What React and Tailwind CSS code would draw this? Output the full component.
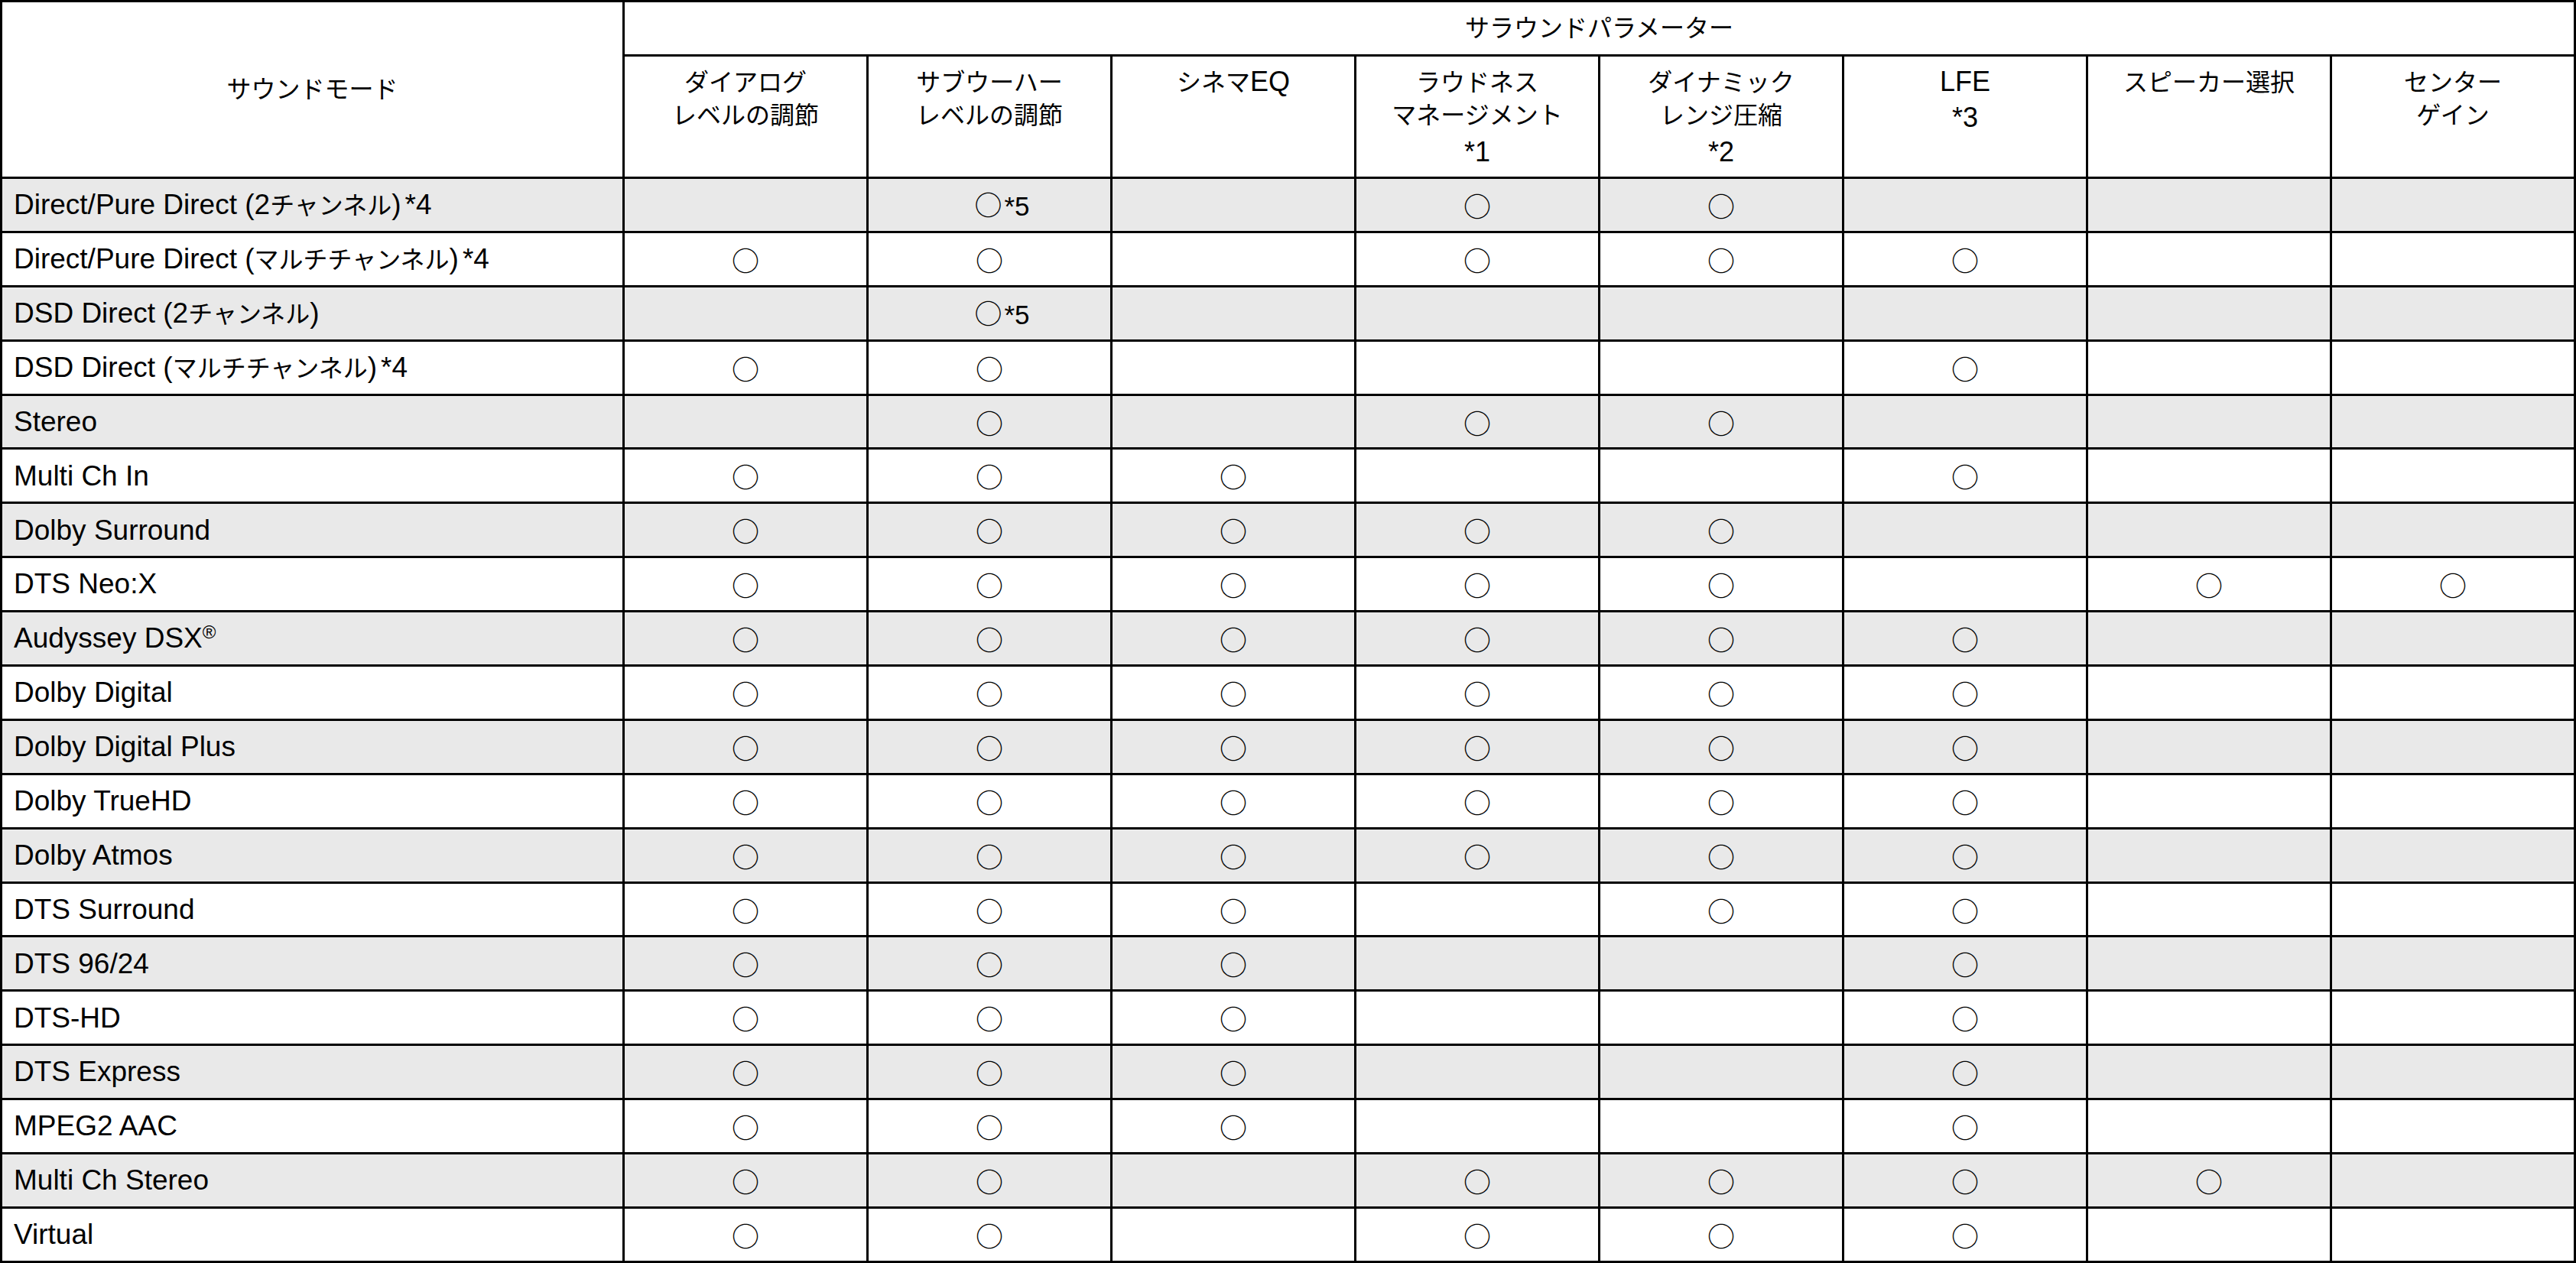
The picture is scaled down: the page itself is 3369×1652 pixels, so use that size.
const HEADERS = [
    ["ダイアログ", "レベルの調節"],
    ["サブウーハー", "レベルの調節"],
    ["シネマEQ"],
    ["ラウドネス", "マネージメント", "*1"],
    ["ダイナミック", "レンジ圧縮", "*2"],
    ["LFE", "*3"],
    ["スピーカー選択"],
    ["センター", "ゲイン"],
];

const Ja = ({ children }) => <span className="text-[32px]">{children}</span>;
const Note = ({ children }) => <span className="ml-[5px]">{children}</span>;

// wrap runs of Japanese in the smaller size, Latin stays at the cell size
function mixed(text) {
    return text.split(/([^\x20-\x7e]+)/).map((part, i) =>
        /[^\x20-\x7e]/.test(part) ? <Ja key={i}>{part}</Ja> : part,
    );
}

// marks: 0 = empty, 1 = ○, 5 = ○*5
const ROWS = [
    { label: <>Direct/Pure Direct (2<Ja>チャンネル</Ja>)<Note>*4</Note></>, marks: "05011000" },
    { label: <>Direct/Pure Direct (<Ja>マルチチャンネル</Ja>)<Note>*4</Note></>, marks: "11011100" },
    { label: <>DSD Direct (2<Ja>チャンネル</Ja>)</>, marks: "05000000" },
    { label: <>DSD Direct (<Ja>マルチチャンネル</Ja>)<Note>*4</Note></>, marks: "11000100" },
    { label: "Stereo", marks: "01011000" },
    { label: "Multi Ch In", marks: "11100100" },
    { label: "Dolby Surround", marks: "11111000" },
    { label: "DTS Neo:X", marks: "11111011" },
    { label: <>Audyssey DSX<sup className="text-[24px]">®</sup></>, marks: "11111100" },
    { label: "Dolby Digital", marks: "11111100" },
    { label: "Dolby Digital Plus", marks: "11111100" },
    { label: "Dolby TrueHD", marks: "11111100" },
    { label: "Dolby Atmos", marks: "11111100" },
    { label: "DTS Surround", marks: "11101100" },
    { label: "DTS 96/24", marks: "11100100" },
    { label: "DTS-HD", marks: "11100100" },
    { label: "DTS Express", marks: "11100100" },
    { label: "MPEG2 AAC", marks: "11100100" },
    { label: "Multi Ch Stereo", marks: "11011110" },
    { label: "Virtual", marks: "11011100" },
];

function Mark({ value }) {
    if (value === "0") return null;
    return (
        <div className="flex items-baseline justify-center">
            <span className="font-['Noto_Sans_CJK_JP',sans-serif] text-[36px] leading-none">○</span>
            {value === "5" && (
                <span className="w-0 whitespace-nowrap pl-[3px] text-[35px] leading-none">*5</span>
            )}
        </div>
    );
}

function HeaderCell({ lines }) {
    return (
        <div className="flex flex-col items-center bg-white pt-[12px] text-[36px] leading-[41px]">
            {lines.map((line, i) => {
                const latinOnly = i > 0 && /^[\x20-\x7e]+$/.test(line);
                return (
                    <div key={i} className={latinOnly ? "mt-[6px]" : ""}>
                        {mixed(line)}
                    </div>
                );
            })}
        </div>
    );
}

export default function App() {
    return (
        <div className="min-h-screen bg-white font-['Liberation_Sans','Noto_Sans_CJK_JP',sans-serif] text-black">
            <div className="grid w-[3369px] grid-cols-[811px_repeat(8,316px)] grid-rows-[68px_157px_repeat(20,67.9px)] gap-[3px] bg-black p-[3px]">
                <div className="row-span-2 flex items-center justify-center bg-white text-[32px]">
                    サウンドモード
                </div>
                <div className="col-span-8 flex items-center justify-center bg-white text-[32px]">
                    サラウンドパラメーター
                </div>
                {HEADERS.map((lines, i) => (
                    <HeaderCell key={i} lines={lines} />
                ))}

                {ROWS.map((row, r) => {
                    const bg = r % 2 === 0 ? "bg-[#e9e9e9]" : "bg-white";
                    return [
                        <div
                            key={`l${r}`}
                            className={`flex items-center whitespace-nowrap pl-[15px] text-[37px] ${bg}`}
                        >
                            <span>{row.label}</span>
                        </div>,
                        ...row.marks.split("").map((m, c) => (
                            <div key={`c${r}-${c}`} className={`flex items-center justify-center ${bg}`}>
                                <Mark value={m} />
                            </div>
                        )),
                    ];
                })}
            </div>
        </div>
    );
}
